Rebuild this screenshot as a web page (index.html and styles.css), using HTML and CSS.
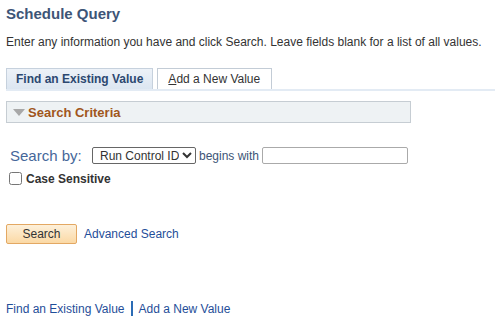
FILE: index.html
```html
<!DOCTYPE html>
<html lang="en">
<head>
  <meta charset="UTF-8" />
  <title>Schedule Query</title>
  <link rel="stylesheet" href="styles.css">
</head>
<body>
  <h1 class="page-title">Schedule Query</h1>
  <p class="instructions">Enter any information you have and click Search. Leave fields blank for a list of all values.</p>

  <div class="tabs">
    <span class="tab active">Find an Existing Value</span>
    <span class="tab"><u>A</u>dd a New Value</span>
  </div>

  <div class="group-bar">
    <span class="arrow"></span>
    <span class="group-title">Search Criteria</span>
  </div>

  <div class="search-row">
    <label class="search-label">Search by:</label>
    <select class="search-select">
      <option>Run Control ID</option>
    </select>
    <span class="op">begins with</span>
    <input type="text" class="search-input" />
  </div>

  <label class="case-row">
    <input type="checkbox" class="case-box" />
    <span>Case Sensitive</span>
  </label>

  <div class="actions">
    <button class="search-btn">Search</button>
    <a href="#" class="link">Advanced Search</a>
  </div>

  <div class="footer-links">
    <a href="#" class="link">Find an Existing Value</a>
    <span class="sep"></span>
    <a href="#" class="link">Add a New Value</a>
  </div>
</body>
</html>
```

FILE: styles.css
```css
body {
  font-family: "Liberation Sans", Arial, sans-serif;
  margin: 0;
  padding: 0 6px;
  background: #fff;
  color: #333;
  font-size: 12px;
}

.page-title {
  font-size: 15px;
  font-weight: bold;
  color: #3d5577;
  margin: 0;
  padding-top: 5px;
  line-height: 18px;
}

.instructions {
  margin: 12px 0 0;
  line-height: 14px;
  color: #333;
}

.tabs {
  display: flex;
  gap: 4px;
  margin-top: 19px;
  border-bottom: 2px solid #e3ebf4;
  height: 21px;
}

.tab {
  display: inline-block;
  height: 20px;
  line-height: 20px;
  padding: 0 11px 0 10px;
  border: 1px solid #c3ccd6;
  border-bottom: none;
  background: #fff;
  color: #333;
}

.tab.active {
  background: linear-gradient(#edf2f8, #dce6f1);
  color: #2c4870;
  font-weight: bold;
  border-color: #c6d1dd;
  padding: 0 9px;
}

.group-bar {
  margin-top: 10px;
  width: 403px;
  height: 20px;
  display: flex;
  align-items: center;
  background: #eef2f4;
  border: 1px solid #c6cdd3;
}

.arrow {
  width: 0;
  height: 0;
  margin: 1px 3px 0 6px;
  border-left: 6px solid transparent;
  border-right: 6px solid transparent;
  border-top: 7px solid #a8a8a8;
}

.group-title {
  font-size: 13px;
  font-weight: bold;
  color: #a0561c;
}

.search-row {
  display: flex;
  align-items: center;
  margin-top: 24px;
  padding-left: 4px;
}

.search-label {
  font-size: 15px;
  color: #46679a;
  width: 82px;
}

.search-select {
  font-family: inherit;
  font-size: 12px;
  height: 17px;
  padding: 0 0 0 3px;
  border: 1px solid #666;
  border-radius: 2px;
  background: #fff;
  color: #333;
  width: 104px;
}

.op {
  margin: 0 3px;
  color: #3d5577;
}

.search-input {
  width: 140px;
  height: 13px;
  border: 1px solid #aaa;
  border-radius: 2px;
  padding: 1px 2px;
  margin: 0;
}

.case-row {
  display: flex;
  align-items: center;
  margin-top: 7px;
  padding-left: 3px;
  font-weight: bold;
  color: #333;
  height: 15px;
}

.case-box {
  margin: 0 4px 0 0;
  width: 13px;
  height: 13px;
}

.actions {
  display: flex;
  align-items: center;
  gap: 7px;
  margin-top: 38px;
}

.search-btn {
  font-family: inherit;
  font-size: 12px;
  width: 71px;
  height: 20px;
  padding: 0;
  color: #333;
  background: linear-gradient(#fdf0da, #fbd9a5);
  border: 1px solid #e3a863;
  border-radius: 2px;
}

.link {
  color: #1f4e99;
  text-decoration: none;
}

.footer-links {
  display: flex;
  align-items: center;
  margin-top: 57px;
}

.sep {
  display: inline-block;
  width: 2px;
  height: 15px;
  background: #2b6cb5;
  margin: 0 6px;
}
```
